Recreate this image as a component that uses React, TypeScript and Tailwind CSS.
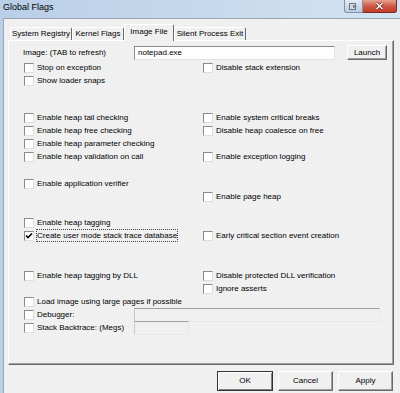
import React from 'react';

type Row = { mt: string; l?: string; r?: string; checked?: boolean; focus?: boolean };

const rows: Row[] = [
  { mt: 'mt-[1px]', l: 'Stop on exception', r: 'Disable stack extension' },
  { mt: 'mt-0', l: 'Show loader snaps' },
  { mt: 'mt-[24px]', l: 'Enable heap tail checking', r: 'Enable system critical breaks' },
  { mt: 'mt-0', l: 'Enable heap free checking', r: 'Disable heap coalesce on free' },
  { mt: 'mt-0', l: 'Enable heap parameter checking' },
  { mt: 'mt-0', l: 'Enable heap validation on call', r: 'Enable exception logging' },
  { mt: 'mt-[14px]', l: 'Enable application verifier' },
  { mt: 'mt-0', r: 'Enable page heap' },
  { mt: 'mt-[13px]', l: 'Enable heap tagging' },
  { mt: 'mt-0', l: 'Create user mode stack trace database', r: 'Early critical section event creation', checked: true, focus: true },
  { mt: 'mt-[27px]', l: 'Enable heap tagging by DLL', r: 'Disable protected DLL verification' },
  { mt: 'mt-0', r: 'Ignore asserts' },
];

function Box({ checked }: { checked?: boolean }) {
  return (
    <span className="w-[10px] h-[10px] shrink-0 bg-white border border-t-[#8a8a8a] border-l-[#8a8a8a] border-b-[#dedede] border-r-[#dedede] flex items-center justify-center">
      {checked && (
        <svg width="8" height="8" viewBox="0 0 8 8">
          <path d="M1 3.5 L3 5.5 L7 1.5" fill="none" stroke="#000" strokeWidth="1.6" />
        </svg>
      )}
    </span>
  );
}

function Check({ label, checked, focus }: { label: string; checked?: boolean; focus?: boolean }) {
  return (
    <div className="flex items-center h-[13px]">
      <Box checked={checked} />
      <span
        className={
          'ml-[2px] leading-[11px] border whitespace-nowrap ' +
          (focus ? 'border-dotted border-[#444]' : 'border-transparent')
        }
      >
        {label}
      </span>
    </div>
  );
}

function Button({ label, def, w }: { label: string; def?: boolean; w: string }) {
  return (
    <div
      className={
        w +
        ' h-[20px] flex items-center justify-center bg-[#f0f0f0] border ' +
        (def
          ? 'border-[#333] shadow-[inset_1px_1px_0_#fff,inset_-1px_-1px_0_#808080]'
          : 'border-t-white border-l-white border-r-[#696969] border-b-[#696969] shadow-[inset_-1px_-1px_0_#a0a0a0]')
      }
    >
      {label}
    </div>
  );
}

export default function App() {
  const tabs = [
    { name: 'System Registry', w: 'w-[62px]' },
    { name: 'Kernel Flags', w: 'w-[52px]' },
    { name: 'Image File', w: 'w-[50px]', active: true },
    { name: 'Silent Process Exit', w: 'w-[72px]' },
  ];

  return (
    <div className="w-[400px] h-[393px] overflow-hidden bg-gradient-to-r from-[#b9cfe8] via-[#c6d8ec] to-[#d6e4f2] font-['Liberation_Sans',Arial,sans-serif] text-[8px] text-black">
      {/* title bar */}
      <div className="h-[18px] flex items-start">
        <div className="pl-[3px] mt-[1px] text-[9px] leading-[13px] text-black">Global Flags</div>
        <div className="ml-auto mr-[3px] flex">
          <div className="w-[19px] h-[13px] rounded-bl-[3px] border border-t-0 border-[#7f93ad] bg-gradient-to-b from-[#e2ebf6] to-[#b9cce3] flex items-center justify-center">
            <svg width="9" height="7" viewBox="0 0 9 7">
              <rect x="0.5" y="0.5" width="6" height="6" fill="#cfd8e3" stroke="#6e7580" />
              <path d="M4 2 L8 3.5 L4 5 Z" fill="#6e7580" />
            </svg>
          </div>
          <div className="w-[34px] h-[13px] rounded-br-[3px] border border-t-0 border-l-0 border-[#7b2b22] bg-gradient-to-b from-[#e5a28f] via-[#cf5a47] to-[#c43b29] flex items-center justify-center">
            <svg width="9" height="8" viewBox="0 0 9 8">
              <path d="M1.5 1 L7.5 7 M7.5 1 L1.5 7" stroke="#5a1d17" strokeWidth="2.6" />
              <path d="M1.5 1 L7.5 7 M7.5 1 L1.5 7" stroke="#fff" strokeWidth="1.5" />
            </svg>
          </div>
        </div>
      </div>

      {/* client area */}
      <div className="ml-[3px] h-[375px] bg-[#f0f0f0] border-t border-l border-[#9aa6b4]">
        {/* tabs */}
        <div className="h-[21px] pl-[6px] flex items-end">
          {tabs.map((t) => (
            <div
              key={t.name}
              className={
                t.w +
                ' flex items-center justify-center whitespace-nowrap bg-[#f0f0f0] rounded-t-[2px] border-t border-l border-r border-t-white border-l-white border-r-[#696969] ' +
                (t.active ? 'h-[17px] -mb-[1px] relative z-10 pb-[2px]' : 'h-[13px]')
              }
            >
              {t.name}
            </div>
          ))}
        </div>

        {/* panel */}
        <div className="ml-[4px] w-[386px] h-[325px] border border-t-white border-l-white border-r-[#696969] border-b-[#696969] shadow-[inset_-1px_-1px_0_#a0a0a0] pl-[15px] pt-[4px]">
          <div className="h-[15px] flex items-center">
            <div className="-ml-[1px] w-[111px] whitespace-nowrap">Image: (TAB to refresh)</div>
            <div className="w-[201px] h-[14px] bg-white border border-t-[#8a8a8a] border-l-[#8a8a8a] border-b-[#e3e3e3] border-r-[#e3e3e3] flex items-center pl-[3px]">
              notepad.exe
            </div>
            <div className="ml-[12px] w-[40px] h-[15px] flex items-center justify-center bg-[#f0f0f0] border border-t-white border-l-white border-r-[#696969] border-b-[#696969] shadow-[inset_-1px_-1px_0_#a0a0a0]">
              Launch
            </div>
          </div>

          {rows.map((r, i) => (
            <div key={i} className={r.mt + ' grid grid-cols-[179px_1fr] h-[13px]'}>
              <div>{r.l && <Check label={r.l} checked={r.checked} focus={r.focus} />}</div>
              <div>{r.r && <Check label={r.r} />}</div>
            </div>
          ))}

          <div className="mt-0 h-[13px]">
            <Check label="Load image using large pages if possible" />
          </div>
          <div className="h-[13px] flex items-center">
            <div className="w-[110px]">
              <Check label="Debugger:" />
            </div>
            <div className="w-[246px] h-[14px] shrink-0 bg-[#f0f0f0] border border-t-[#a0a0a0] border-l-[#c8c8c8] border-b-[#e8e8e8] border-r-[#e8e8e8]" />
          </div>
          <div className="h-[13px] flex items-center">
            <div className="w-[110px]">
              <Check label="Stack Backtrace: (Megs)" />
            </div>
            <div className="w-[55px] h-[14px] shrink-0 bg-[#f0f0f0] border border-t-[#a0a0a0] border-l-[#c8c8c8] border-b-[#e8e8e8] border-r-[#e8e8e8]" />
          </div>
        </div>

        {/* buttons */}
        <div className="mt-[6px] pr-[7px] flex justify-end gap-[5px]">
          <Button label="OK" def w="w-[56px]" />
          <Button label="Cancel" w="w-[55px]" />
          <Button label="Apply" w="w-[55px]" />
        </div>
      </div>
    </div>
  );
}
